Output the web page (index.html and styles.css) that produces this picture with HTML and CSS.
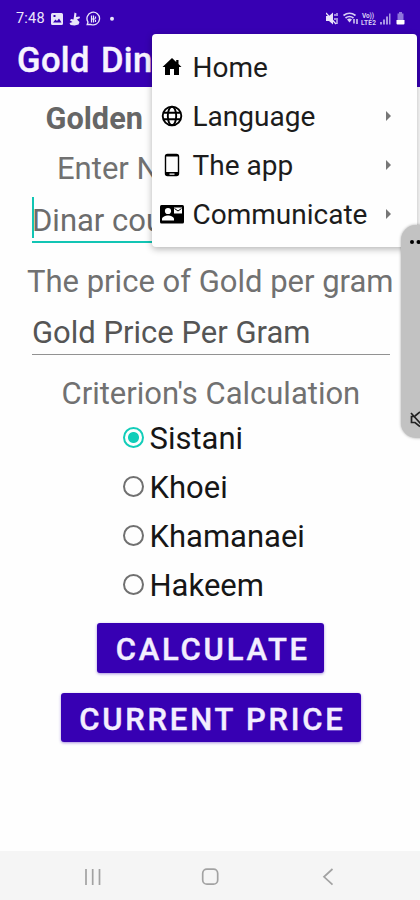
FILE: index.html
```
<!DOCTYPE html>
<html lang="en">
<head>
<meta charset="utf-8">
<title>Gold Dinar</title>
<link rel="stylesheet" href="styles.css">
</head>
<body>
<div class="phone">
  <header class="top">
    <div class="status">
      <span class="clock">7:48</span>
      <svg class="notes" width="64" height="16" viewBox="0 0 64 16">
        <path fill="#e9e4fa" fill-rule="evenodd" d="M2.500 2h9a1.500 1.500 0 0 1 1.500 1.500v9a1.500 1.500 0 0 1-1.500 1.500h-9A1.500 1.500 0 0 1 1 12.500v-9A1.500 1.500 0 0 1 2.500 2zM3 11.500h8.500L9 7.500 7 10 5.500 8.500zM3.500 4v2h2V4z"/>
        <path fill="#e9e4fa" d="M24.500 1.500l2 1-.5 3.500 3.500-.5.5 1.500-3 1.500 2.500 2.500-1 2.500-4 1-4-.5-1-2 3-1-2.500-1.500 1-1.500 2.500.5z"/>
        <path fill="none" stroke="#e9e4fa" stroke-width="1.300" d="M37.200 13.500l.8-2.500a6.300 6.300 0 1 1 2.700 2.300z"/>
        <path fill="none" stroke="#e9e4fa" stroke-width="1.200" d="M41.500 4.500v7M43.500 4.500v7M45.500 5.500v2M45.500 9v2M41 8h4.500"/>
        <circle cx="62" cy="7.700" r="2" fill="#e9e4fa"/>
      </svg>
      <svg class="signals" width="82" height="16" viewBox="0 0 82 16">
        <path fill="#e9e4fa" d="M0 5h3l4-3.500v12L3 10H0z"/>
        <path fill="none" stroke="#e9e4fa" stroke-width="1.200" d="M0 2l10 11M9 3v2M9 7v2M11 2v3M11 7v6"/>
        <path fill="none" stroke="#d9d0f5" stroke-width="1.700" d="M17.500 4.500q6-4.500 12 0M19.500 7q4-3 8 0"/>
        <path fill="#d9d0f5" d="M21 8.500q2.500-2 5 0l-2.500 3z"/>
        <path fill="none" stroke="#d9d0f5" stroke-width="1.500" d="M28 8v4.500M31 13V8"/>
        <text x="36" y="6.500" class="lte" textLength="12">Vo))</text>
        <text x="35" y="13.500" class="lte" textLength="15">LTE2</text>
        <path fill="#a995e4" d="M54 11h2v2.500h-2zM57 8.500h2v5h-2zM60 5.500h2v8h-2zM63 2.500h1.500v11H63z"/>
        <path fill="#8e75dc" d="M71.500 2.500H73V1h3v1.500h1.500V9h-6z"/><path fill="#fff" d="M70.500 9h8v3.500q0 1-1 1h-6q-1 0-1-1z"/>
      </svg>
    </div>
    <h1 class="title">Gold Dinar</h1>
  </header>

  <main class="form">
    <h2 class="row heading">Golden Dinar</h2>
    <div class="row enter">Enter Number of Dinars</div>
    <div class="field active"><span>Dinar count</span></div>
    <div class="row price">The price of Gold per gram</div>
    <div class="field"><span>Gold Price Per Gram</span></div>
    <div class="row criterion">Criterion's Calculation</div>
    <div class="radios">
      <div class="radio"><i class="dot on"></i><span>Sistani</span></div>
      <div class="radio"><i class="dot"></i><span>Khoei</span></div>
      <div class="radio"><i class="dot"></i><span>Khamanaei</span></div>
      <div class="radio"><i class="dot"></i><span>Hakeem</span></div>
    </div>
    <div class="buttons">
      <div class="btn calc">CALCULATE</div>
      <div class="btn current">CURRENT PRICE</div>
    </div>
  </main>

  <nav class="nav">
    <svg width="420" height="49" viewBox="0 0 420 49" fill="none" stroke="#a2a2a2" stroke-width="1.700">
      <path d="M86 18v16M92.700 18v16M99.500 18v16"/>
      <rect x="202.700" y="18.200" width="15" height="15" rx="4.200"/>
      <path d="M332.500 18l-8.500 7.800 8.500 7.800"/>
    </svg>
  </nav>

  <div class="menu">
    <div class="item">
      <svg width="26" height="26" viewBox="0 0 26 26"><path d="M13 4L3.500 13H6v8h5v-6h4v6h5v-8h2.500l-3-3V6h-2.300v2z"/></svg>
      <span>Home</span>
    </div>
    <div class="item">
      <svg width="26" height="26" viewBox="0 0 26 26" fill="none" stroke="#000" stroke-width="1.900"><circle cx="13" cy="13" r="9.300"/><ellipse cx="13" cy="13" rx="4.200" ry="9.300"/><path d="M4.500 9.700h17M4.500 16.300h17"/></svg>
      <span>Language</span><i class="arrow"></i>
    </div>
    <div class="item">
      <svg width="26" height="26" viewBox="0 0 26 26"><path fill-rule="evenodd" d="M8.500 1.800h9a2.700 2.700 0 0 1 2.700 2.700v17a2.700 2.700 0 0 1-2.700 2.700h-9a2.700 2.700 0 0 1-2.700-2.700v-17a2.700 2.700 0 0 1 2.700-2.700zM7.200 4.500v15.500h11.600V4.500zM10.500 21.500v1.200h5v-1.200z"/></svg>
      <span>The app</span><i class="arrow"></i>
    </div>
    <div class="item">
      <svg width="26" height="26" viewBox="0 0 26 26"><rect x="1" y="4" width="24" height="18.500" rx="1.500"/><circle cx="9" cy="10" r="3.100" fill="#fff"/><path fill="#fff" d="M3 19.500v-1.500c0-2.300 3.500-3.600 6-3.600s6 1.300 6 3.600v1.500z"/><path fill="#fff" d="M15 6.500h8v6h-8z"/><path fill="none" stroke="#000" d="M15.500 7.500L19 10l3.500-2.500"/></svg>
      <span>Communicate</span><i class="arrow"></i>
    </div>
  </div>

  <aside class="panel">
    <svg width="19" height="213" viewBox="0 0 19 213"><circle cx="11" cy="17" r="2"/><circle cx="17.500" cy="17" r="2"/><path fill="none" stroke="#222" stroke-width="1.700" d="M10 188l10 11M19 187l-5 4M14 191.500h-3.500v6h3.500l5 4"/></svg>
  </aside>
</div>
</body>
</html>
```
FILE: styles.css
```
* { box-sizing: border-box; }
body { margin: 0; font-family: Roboto, sans-serif; background: #fff; }
.phone { position: relative; width: 420px; height: 900px; overflow: hidden; display: flex; flex-direction: column; background: #fefefe; }
.top { height: 87px; background: #3700b3; color: #f7f3ff; flex: none; }
.status { height: 36px; padding: 1px 12px 0 16px; display: flex; align-items: center; }
.clock { font-size: 14.5px; line-height: 36px; width: 34px; letter-spacing: .2px; color: #ece6fb; }
.signals { margin-left: auto; }
.lte { font: 700 6.5px Roboto, sans-serif; fill: #d9d0f5; }
.title { margin: 0; padding-left: 17px; font-size: 34.5px; font-weight: 500; line-height: 48px; letter-spacing: .4px; word-spacing: 2px; -webkit-text-stroke: .4px; white-space: nowrap; }
.form { flex: 1; padding-top: 7px; color: #717171; font-size: 31px; white-space: nowrap; display: flex; flex-direction: column; }
.row { height: 50px; line-height: 52px; }
.heading { margin: 0; height: 49px; line-height: 49px; font-size: 30.7px; font-weight: 700; padding-left: 45.5px; word-spacing: 2px; color: #666; }
.enter { padding-left: 57px; }
.field { margin: 0 30px 0 32px; height: 50px; line-height: 55px; border-bottom: 1.5px solid #929292; color: #555; }
.active { border-bottom: 2px solid #12c5b4; line-height: 55px; color: #6c6c6c; background: linear-gradient(#12c5b4, #12c5b4) 0 4px / 2px 41px no-repeat; }
.price { margin-top: 13px; padding-left: 27px; }
.field:not(.active) { margin-top: -1px; }
.criterion { margin-top: 18px; height: 40px; line-height: 42px; padding-left: 61.5px; }
.radios { display: flex; flex-direction: column; padding-left: 122.5px; color: #161616; }
.radio { height: 49px; line-height: 51px; display: flex; align-items: center; gap: 6px; }
.radio span { padding-top: 2px; }
.dot { width: 21px; height: 21px; border: 2px solid #707070; border-radius: 50%; margin-top: -1px; }
.on { border-color: #12cdb9; background: radial-gradient(circle, #12cdb9 5px, transparent 6px); }
.buttons { display: flex; flex-direction: column; align-items: center; gap: 20px; padding: 14px 0 0 1.5px; letter-spacing: 2.77px; }
.btn { height: 49.5px; border-radius: 3px; background: #3700b3; color: #f3eeff; font-weight: 500; -webkit-text-stroke: .4px; line-height: 54px; box-shadow: 0 1px 3px #3700b370; }
.calc { width: 227px; padding-left: 18.5px; }
.current { width: 300px; padding-left: 18.5px; }
.nav { height: 49px; background: #f5f5f5; flex: none; }
.nav svg { display: block; }
.menu { position: absolute; left: 151.5px; top: 34px; width: 265px; height: 213px; padding-top: 8px; border-radius: 4px; background: #fefefe; box-shadow: 0 2px 7px #0000004d; color: #1c1c1c; font-size: 28px; }
.item { height: 49px; line-height: 49px; display: flex; align-items: center; padding: 0 26px 0 7.5px; gap: 7.5px; white-space: nowrap; }
.item span { padding-top: 2px; }
.item svg { flex: none; }
.arrow { margin-left: auto; border-left: 5.5px solid #777; border-top: 5px solid transparent; border-bottom: 5px solid transparent; }
.panel { position: absolute; left: 401px; top: 225px; width: 24px; height: 213px; border-radius: 15px 0 0 15px; background: #c2c2c2; box-shadow: 0 0 3px #00000059; }
```
